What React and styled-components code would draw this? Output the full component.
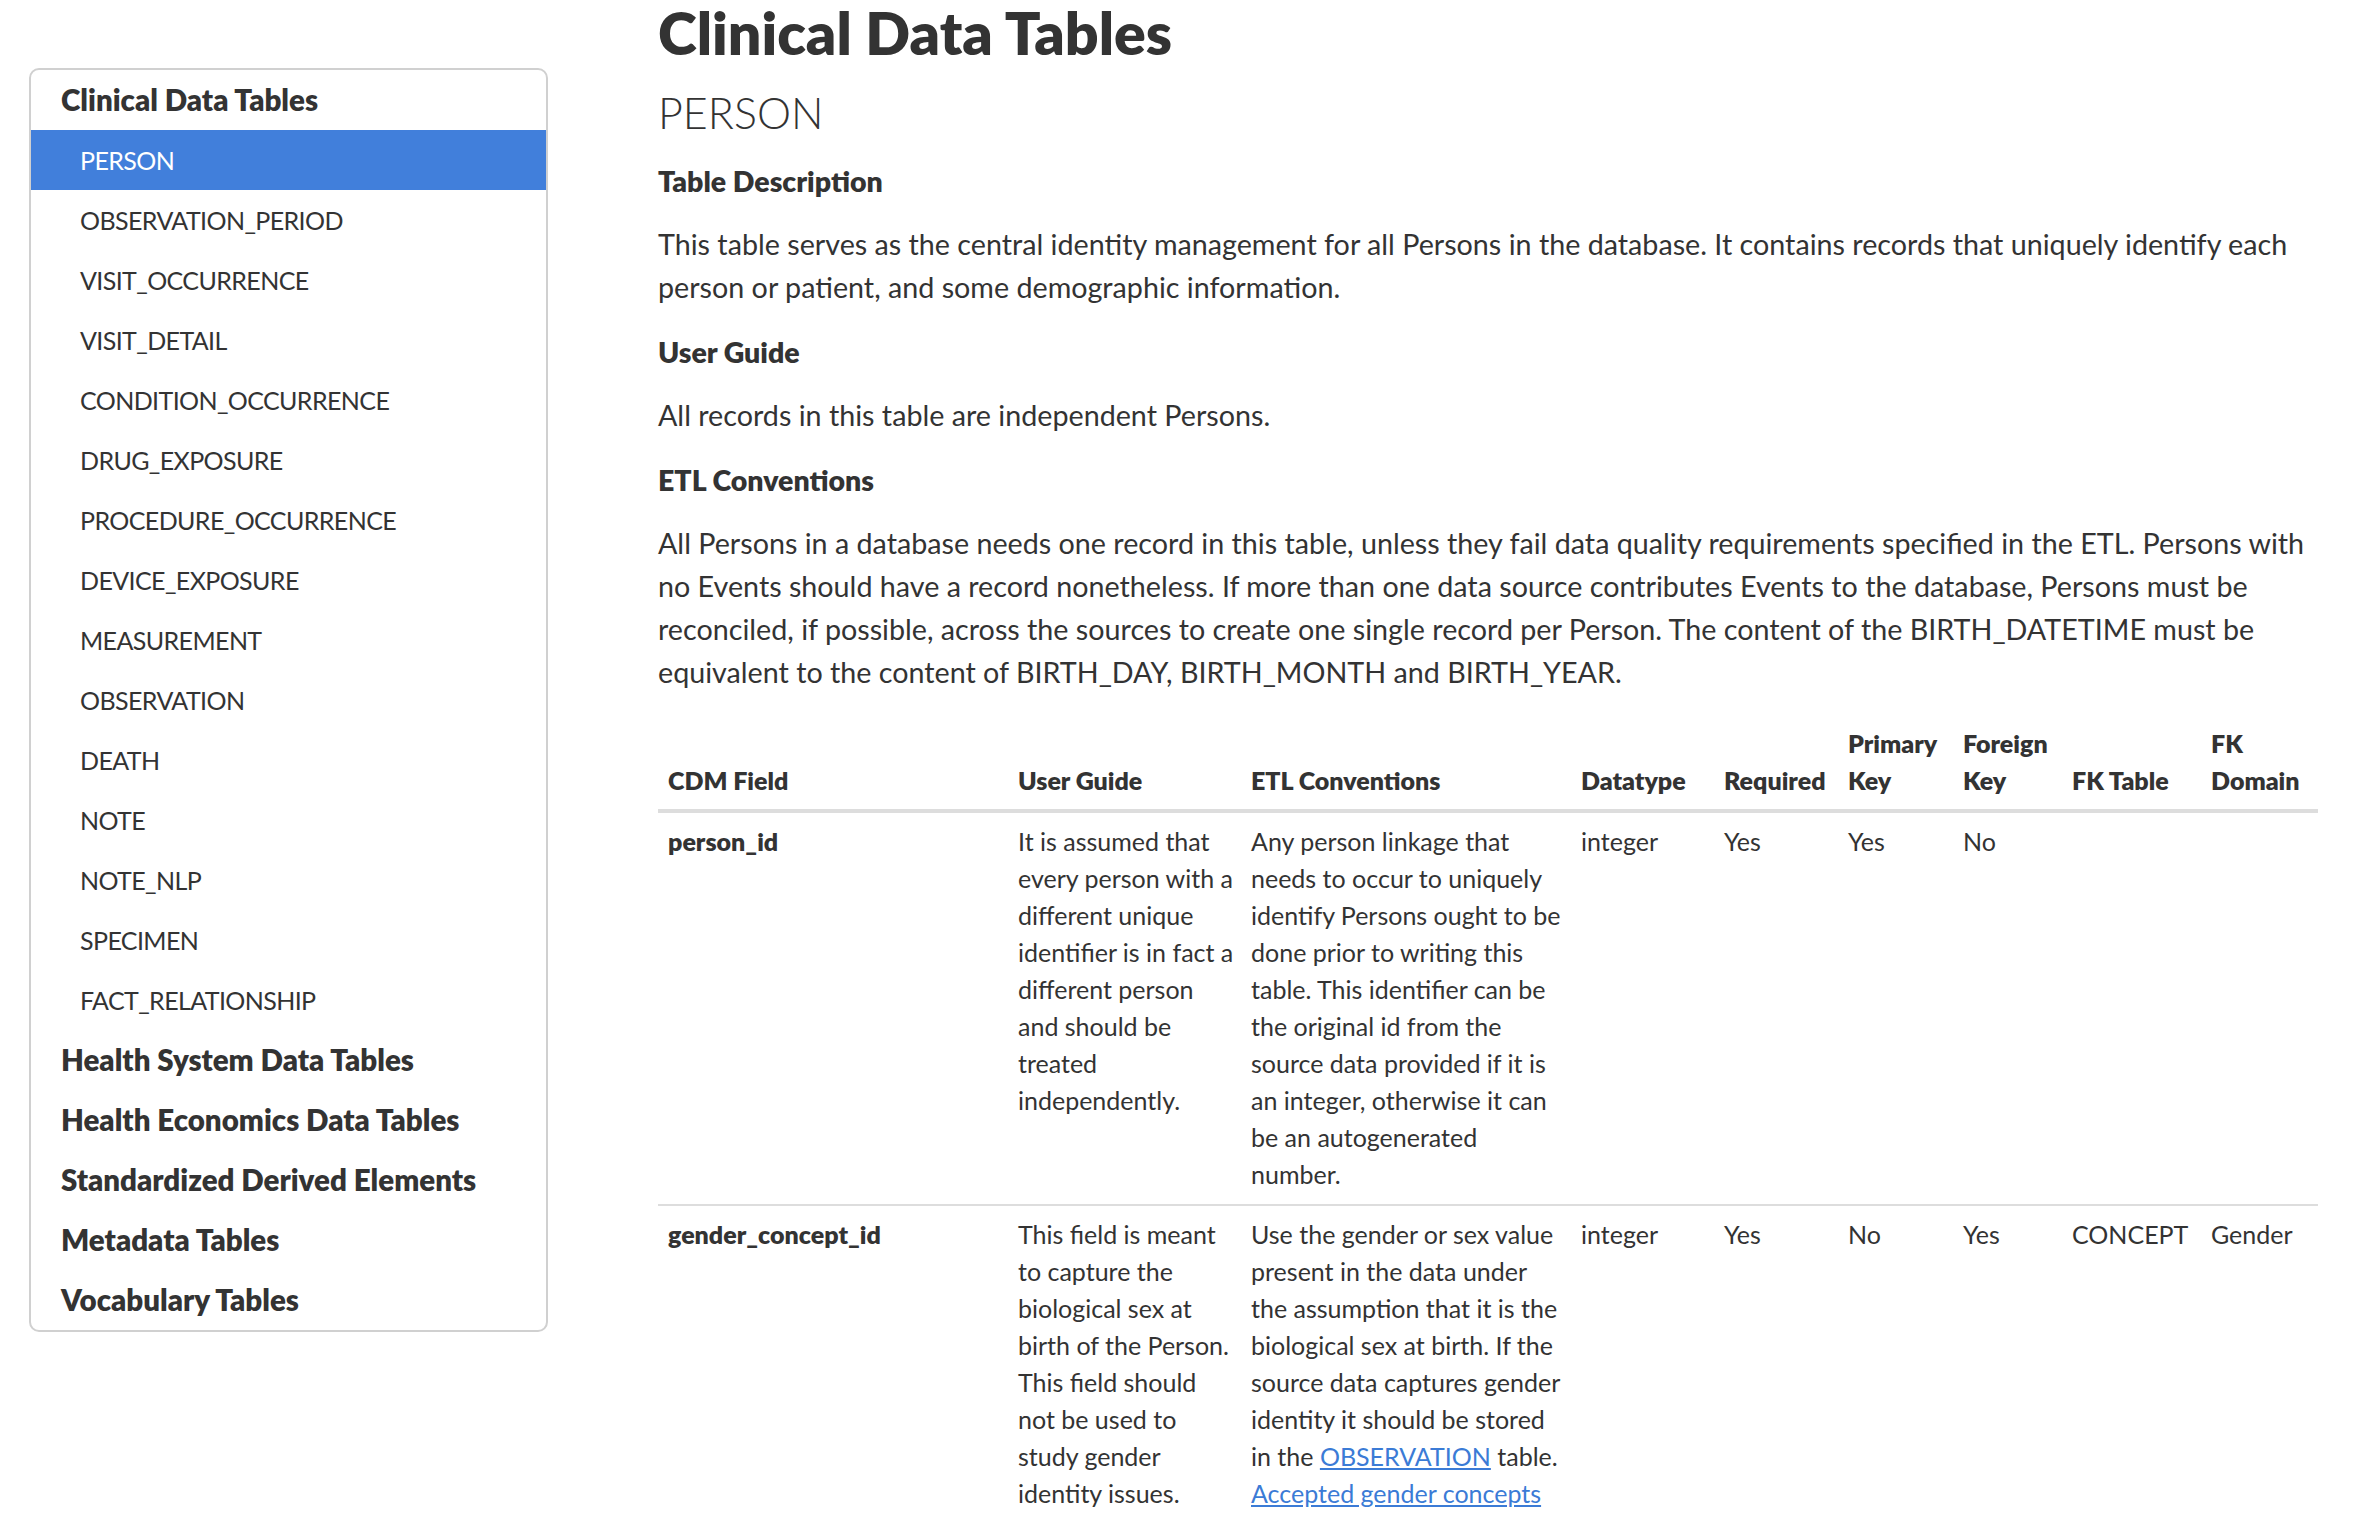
import React from "react";
import styled, { createGlobalStyle } from "styled-components";

const GlobalStyle = createGlobalStyle`
  html, body {
    margin: 0;
    padding: 0;
    background: #fff;
  }
  body {
    font-family: Lato, "Noto Sans", sans-serif;
    color: #333;
  }
`;

const Link = styled.a`
  color: #3b7bd6;
  text-decoration: underline;
`;

const clinical = [
  "PERSON",
  "OBSERVATION_PERIOD",
  "VISIT_OCCURRENCE",
  "VISIT_DETAIL",
  "CONDITION_OCCURRENCE",
  "DRUG_EXPOSURE",
  "PROCEDURE_OCCURRENCE",
  "DEVICE_EXPOSURE",
  "MEASUREMENT",
  "OBSERVATION",
  "DEATH",
  "NOTE",
  "NOTE_NLP",
  "SPECIMEN",
  "FACT_RELATIONSHIP",
];

const groups = [
  "Health System Data Tables",
  "Health Economics Data Tables",
  "Standardized Derived Elements",
  "Metadata Tables",
  "Vocabulary Tables",
];

const columns = [
  { label: ["CDM Field"], width: 350 },
  { label: ["User Guide"], width: 233 },
  { label: ["ETL Conventions"], width: 330 },
  { label: ["Datatype"], width: 143 },
  { label: ["Required"], width: 124 },
  { label: ["Primary", "Key"], width: 115 },
  { label: ["Foreign", "Key"], width: 109 },
  { label: ["FK Table"], width: 139 },
  { label: ["FK", "Domain"], width: 117 },
];

// line breaks kept as in the rendered docs
const rows = [
  {
    field: "person_id",
    guide: [
      "It is assumed that",
      "every person with a",
      "different unique",
      "identifier is in fact a",
      "different person",
      "and should be",
      "treated",
      "independently.",
    ],
    etl: [
      "Any person linkage that",
      "needs to occur to uniquely",
      "identify Persons ought to be",
      "done prior to writing this",
      "table. This identifier can be",
      "the original id from the",
      "source data provided if it is",
      "an integer, otherwise it can",
      "be an autogenerated",
      "number.",
    ],
    rest: ["integer", "Yes", "Yes", "No", "", ""],
  },
  {
    field: "gender_concept_id",
    guide: [
      "This field is meant",
      "to capture the",
      "biological sex at",
      "birth of the Person.",
      "This field should",
      "not be used to",
      "study gender",
      "identity issues.",
    ],
    etl: [
      "Use the gender or sex value",
      "present in the data under",
      "the assumption that it is the",
      "biological sex at birth. If the",
      "source data captures gender",
      "identity it should be stored",
      <>
        in the <Link href="#">OBSERVATION</Link> table.
      </>,
      <Link href="#">Accepted gender concepts</Link>,
    ],
    rest: ["integer", "Yes", "No", "Yes", "CONCEPT", "Gender"],
  },
];

const Page = styled.div`
  display: flex;
  align-items: flex-start;
  padding-left: 29px;
`;

const SideColumn = styled.aside`
  width: 519px;
  flex-shrink: 0;
  padding-top: 68px;
`;

const NavBox = styled.nav`
  border: 2px solid #d0d0d0;
  border-radius: 10px;
  overflow: hidden;
  display: flex;
  flex-direction: column;
`;

const GroupItem = styled.div`
  height: 60px;
  line-height: 60px;
  padding-left: 30px;
  font-size: 29.5px;
  font-weight: 800;
  color: #333;
  white-space: nowrap;
`;

const TableItem = styled.div`
  height: 60px;
  line-height: 60px;
  padding-left: 49px;
  font-size: 25px;
  letter-spacing: -0.6px;
  color: ${(p) => (p.$active ? "#fff" : "#333")};
  background: ${(p) => (p.$active ? "#417fdb" : "transparent")};
`;

const Main = styled.main`
  margin-left: 110px;
  width: 1660px;
  flex-shrink: 0;
`;

const Title = styled.h1`
  margin: 0;
  font-size: 59px;
  font-weight: 800;
  line-height: 66px;
`;

const TableName = styled.h2`
  margin: 22px 0 2px;
  font-size: 43px;
  font-weight: 300;
  line-height: 50px;
`;

const SectionHeading = styled.h3`
  margin: 21.5px 0 0;
  font-size: 28.5px;
  font-weight: 800;
  line-height: 42px;
`;

const Paragraph = styled.p`
  margin: 21.5px 0 0;
  font-size: 28.7px;
  line-height: 43px;
`;

const FieldTable = styled.table`
  margin-top: 20.5px;
  width: 100%;
  table-layout: fixed;
  border-collapse: collapse;
  font-size: 25px;
  line-height: 37px;
`;

const HeadCell = styled.th`
  text-align: left;
  vertical-align: bottom;
  font-weight: 800;
  padding: 10px;
  border-bottom: 4px solid #ddd;
  white-space: nowrap;
`;

const Row = styled.tr`
  border-bottom: 2px solid #ddd;
`;

const Cell = styled.td`
  vertical-align: top;
  padding: 10px 10px 11px;
  white-space: nowrap;
`;

const FieldName = styled(Cell)`
  font-weight: 800;
`;

const Line = styled.span`
  display: block;
  white-space: nowrap;
`;

const Lines = ({ lines }) =>
  lines.map((l, i) => <Line key={i}>{l}</Line>);

const App = () => {
  return (
    <>
      <GlobalStyle />
      <Page>
        <SideColumn>
          <NavBox>
            <GroupItem>Clinical Data Tables</GroupItem>
            {clinical.map((name) => (
              <TableItem key={name} $active={name === "PERSON"}>
                {name}
              </TableItem>
            ))}
            {groups.map((g) => (
              <GroupItem key={g}>{g}</GroupItem>
            ))}
          </NavBox>
        </SideColumn>

        <Main>
          <Title>Clinical Data Tables</Title>
          <TableName>PERSON</TableName>

          <SectionHeading>Table Description</SectionHeading>
          <Paragraph>
            This table serves as the central identity management for all Persons in the
            database. It contains records that uniquely identify each person or patient, and
            some demographic information.
          </Paragraph>

          <SectionHeading>User Guide</SectionHeading>
          <Paragraph>All records in this table are independent Persons.</Paragraph>

          <SectionHeading>ETL Conventions</SectionHeading>
          <Paragraph>
            All Persons in a database needs one record in this table, unless they fail data
            quality requirements specified in the ETL. Persons with no Events should have a
            record nonetheless. If more than one data source contributes Events to the
            database, Persons must be reconciled, if possible, across the sources to create
            one single record per Person. The content of the BIRTH_DATETIME must be equivalent
            to the content of BIRTH_DAY, BIRTH_MONTH and BIRTH_YEAR.
          </Paragraph>

          <FieldTable>
            <colgroup>
              {columns.map((c) => (
                <col key={c.label.join(" ")} style={{ width: c.width }} />
              ))}
            </colgroup>
            <thead>
              <tr>
                {columns.map((c) => (
                  <HeadCell key={c.label.join(" ")}>
                    <Lines lines={c.label} />
                  </HeadCell>
                ))}
              </tr>
            </thead>
            <tbody>
              {rows.map((r) => (
                <Row key={r.field}>
                  <FieldName>{r.field}</FieldName>
                  <Cell>
                    <Lines lines={r.guide} />
                  </Cell>
                  <Cell>
                    <Lines lines={r.etl} />
                  </Cell>
                  {r.rest.map((v, i) => (
                    <Cell key={i}>{v}</Cell>
                  ))}
                </Row>
              ))}
            </tbody>
          </FieldTable>
        </Main>
      </Page>
    </>
  );
};

export default App;
